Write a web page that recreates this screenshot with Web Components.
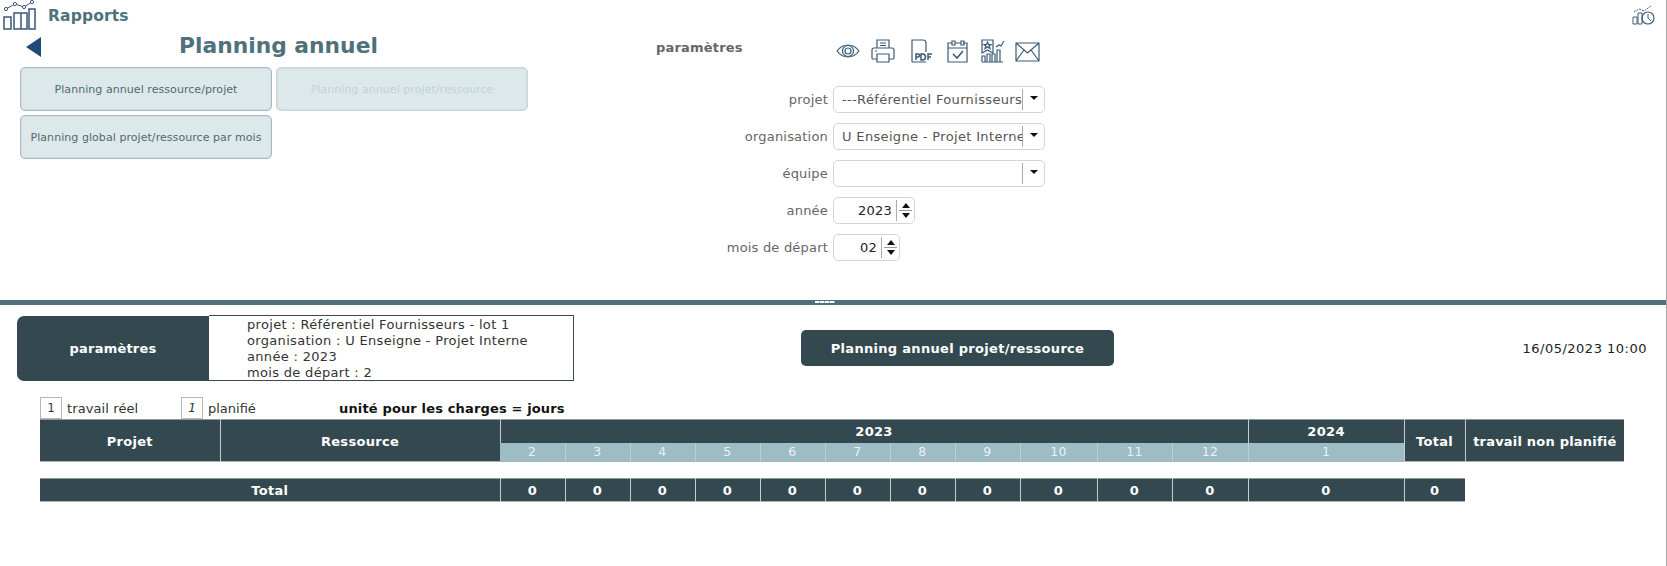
<!DOCTYPE html>
<html lang="fr">
<head>
<meta charset="utf-8">
<title>Planning annuel</title>
<style>
    html, body { margin: 0; height: 100%; background: #fff; }
    body {
        font-family: "DejaVu Sans", Verdana, sans-serif;
        font-size: 13px;
        overflow: hidden;
        box-sizing: border-box;
        border-right: 1px solid #a8a8a8;
    }
    .columns { display: flex; align-items: flex-start; }
</style>
</head>
<body>
<report-topbar title-text="Rapports"></report-topbar>
<div class="columns">
    <report-menu heading="Planning annuel"></report-menu>
    <report-params></report-params>
</div>
<pane-splitter></pane-splitter>
<report-summary></report-summary>
<report-legend></report-legend>
<planning-table></planning-table>

<script>
const ICON = 'fill="none" stroke="#3a5a78" stroke-width="1.2"';

class ReportTopbar extends HTMLElement {
    constructor() {
        super();
        this.attachShadow({ mode: "open" });
    }

    connectedCallback() {
        this.shadowRoot.innerHTML = `
            <style>
                :host { display: flex; align-items: flex-start; height: 33px; }
                svg { display: block; }
                .logo { margin: 0 0 0 3px; }
                .name { margin: 6px 0 0 12px; font-weight: bold; font-size: 15.5px; line-height: 20px; letter-spacing: .15px; color: #4f717c; }
                .history { margin: 4px 11px 0 auto; }
            </style>
            <svg class="logo" width="33" height="31" viewBox="0 0 33 31" ${'fill="none" stroke="#3a5578" stroke-width="1.5"'}>
                <path d="M1 17h7v12H1zM11 13h7v16h-7zM18 13h6v16h-6zM26 9h6v20h-6z"/>
                <path d="M3 9l9-5 9 3 8-5" stroke-width="1"/>
                <circle cx="3" cy="9" r="1.6" fill="#fff" stroke-width="1"/>
                <circle cx="12" cy="4" r="1.6" fill="#fff" stroke-width="1"/>
                <circle cx="21" cy="7" r="1.6" fill="#fff" stroke-width="1"/>
                <circle cx="29" cy="2" r="1.6" fill="#fff" stroke-width="1"/>
            </svg>
            <span class="name">${this.getAttribute('title-text')}</span>
            <svg class="history" width="23" height="21" viewBox="0 0 23 21" fill="none" stroke="#3f5f7c" stroke-width="1">
                <path d="M1 13h4v7H1zM6 9h4v11H6z"/>
                <circle cx="16" cy="14" r="6" stroke-width="1.2"/>
                <path d="M16 10v4l3 3"/>
                <path d="M2 8l5-3 5 2 7-5" stroke-dasharray="2 1"/>
            </svg>
        `;
    }
}

class ReportMenu extends HTMLElement {
    constructor() {
        super();
        this.attachShadow({ mode: "open" });
    }

    connectedCallback() {
        this.shadowRoot.innerHTML = `
            <style>
                :host { display: block; width: 636px; padding-left: 20px; box-sizing: content-box; height: 267px; }
                .head { display: flex; align-items: flex-start; height: 34px; }
                .back { width: 0; height: 0; margin: 4px 0 0 6px; border-style: solid; border-width: 10px 15px 10px 0; border-color: transparent #23497a transparent transparent; }
                h1 { margin: 1px 0 0 138px; font-size: 21.8px; line-height: 24px; font-weight: bold; color: #4f717c; }
                .grid { display: grid; grid-template-columns: 252px 252px; gap: 4px 4px; }
                button {
                    height: 44px; padding: 0; font: 11px "DejaVu Sans", Verdana, sans-serif; letter-spacing: .06px; color: #4f6a72;
                    background: #dde8eb; border: 1px solid #a6bcc5; border-radius: 5px; box-shadow: inset 0 0 0 .5px #c4d3d9;
                }
                button:disabled { color: #bfd3d9; border-color: #c6d6dc; }
            </style>
            <div class="head">
                <div class="back"></div>
                <h1>${this.getAttribute('heading')}</h1>
            </div>
            <div class="grid">
                <button>Planning annuel ressource/projet</button>
                <button disabled>Planning annuel projet/ressource</button>
                <button>Planning global projet/ressource par mois</button>
            </div>
        `;
    }
}

class ReportParams extends HTMLElement {
    constructor() {
        super();
        this.attachShadow({ mode: "open" });
    }

    connectedCallback() {
        this.shadowRoot.innerHTML = `
            <style>
                :host { display: block; width: 400px; color: #666; }
                .top { display: flex; height: 53px; }
                .title { width: 181px; padding-top: 7px; font-weight: bold; font-size: 13px; line-height: 16px; letter-spacing: .2px; }
                .tools { display: flex; align-items: flex-start; padding-top: 6px; }
                .tools svg { display: block; margin-right: 11px; }
                .form { display: grid; grid-template-columns: 172px auto; justify-content: start; gap: 10px 5px; align-items: center; }
                label { text-align: right; font-size: 13px; letter-spacing: .2px; }
            </style>
            <div class="top">
                <div class="title">paramètres</div>
                <div class="tools">
                    <svg style="margin-left:-1px" width="24" height="24" viewBox="0 0 24 24" ${ICON}>
                        <path d="M1 12c6-8 16-8 22 0-6 8-16 8-22 0z"/>
                        <circle cx="12" cy="12" r="5.5"/><circle cx="12" cy="12" r="3"/>
                    </svg>
                    <svg width="25" height="24" viewBox="0 0 25 24" ${ICON}>
                        <path d="M6 9V1h12v8M9 4h6M9 6.500h6"/>
                        <path d="M6 20H2a1 1 0 0 1-1-1v-8a2 2 0 0 1 2-2h18a2 2 0 0 1 2 2v8a1 1 0 0 1-1 1h-4"/>
                        <path d="M6 15h12v8H6zM4 12h2"/>
                    </svg>
                    <svg style="margin-left:3px" width="24" height="24" viewBox="0 0 24 24" ${ICON}>
                        <path d="M2 23V1h11a3 3 0 0 1 3 3v9M2 23h14"/>
                        <rect x="4" y="14" width="20" height="8" fill="#fff" stroke="none"/>
                        <path d="M6 21v-6h2a1.500 1.500 0 0 1 0 3H6M11 15v6h1.500a3 3 0 0 0 0-6zM18 21v-6h4M18 18h3" stroke-width="1.5"/>
                    </svg>
                    <svg style="margin-left:2px" width="22" height="24" viewBox="0 0 22 24" ${ICON}>
                        <path d="M5 4H1v19h19V4h-4M8 4h6M1 9h19"/>
                        <path d="M5 2h3v4H5zM14 2h3v4h-3z"/>
                        <path d="M6 15l4 4 6-7" stroke-width="1.6"/>
                    </svg>
                    <svg style="margin-left:1px;margin-right:10px" width="24" height="24" viewBox="0 0 24 24" ${ICON}>
                        <path d="M1 1h11v13l-5.500-3L1 14z"/>
                        <path d="M6.500 3l1 2.500h2.500l-2 1.500 1 2.500-2.500-1.500-2.500 1.500 1-2.500-2-1.500h2.500z"/>
                        <path d="M1 23v-6h3v6M6 23v-8h3v8M11 23v-8h3v8M16 23V11h3v12M1 23h21M15 8l3-2 2 1 3-5"/>
                    </svg>
                    <svg width="25" height="24" viewBox="0 0 25 24" ${ICON}>
                        <path d="M1 4h23v18H1zM1 4l11.500 10L24 4M1 22l8-11M24 22l-8-11"/>
                    </svg>
                </div>
            </div>
            <div class="form">
                <label>projet</label><combo-field value="---Référentiel Fournisseurs"></combo-field>
                <label>organisation</label><combo-field value="U Enseigne - Projet Interne"></combo-field>
                <label>équipe</label><combo-field value=""></combo-field>
                <label>année</label><spin-field value="2023" width="82"></spin-field>
                <label>mois de départ</label><spin-field value="02" width="67"></spin-field>
            </div>
        `;
    }
}

class ComboField extends HTMLElement {
    constructor() {
        super();
        this.attachShadow({ mode: "open" });
    }

    connectedCallback() {
        this.shadowRoot.innerHTML = `
            <style>
                :host { display: flex; align-items: center; box-sizing: border-box; width: 212px; height: 27px; border: 1px solid #d4d4d4; border-radius: 5px; background: #fff; }
                .val { flex: 1; min-width: 0; padding-left: 8px; overflow: hidden; white-space: nowrap; font-size: 13px; color: #555; letter-spacing: .34px; }
                .btn { flex: none; display: flex; align-items: center; justify-content: center; width: 22px; height: 21px; border-left: 1px solid #aaa; padding-bottom: 3px; box-sizing: border-box; }
                .btn i { width: 0; height: 0; border-style: solid; border-width: 4px 4px 0; border-color: #111 transparent transparent; }
            </style>
            <span class="val">${this.getAttribute('value')}</span>
            <span class="btn"><i></i></span>
        `;
    }
}

class SpinField extends HTMLElement {
    constructor() {
        super();
        this.attachShadow({ mode: "open" });
    }

    connectedCallback() {
        this.shadowRoot.innerHTML = `
            <style>
                :host { display: flex; align-items: center; box-sizing: border-box; width: ${this.getAttribute('width')}px; height: 27px; border: 1px solid #d4d4d4; border-radius: 5px; background: #fff; }
                .val { flex: 1; text-align: right; padding-right: 4px; font-size: 13px; color: #222; letter-spacing: .2px; }
                .btn { display: flex; flex-direction: column; align-items: center; justify-content: space-between; width: 18px; height: 21px; border-left: 1px solid #aaa; box-sizing: border-box; padding: 3px 0; position: relative; }
                .btn::after { content: ""; position: absolute; left: 2px; right: 2px; top: 10px; border-top: 1px solid #999; }
                .up, .down { width: 0; height: 0; border-style: solid; }
                .up { border-width: 0 4px 5px; border-color: transparent transparent #111; }
                .down { border-width: 5px 4px 0; border-color: #111 transparent transparent; }
            </style>
            <span class="val">${this.getAttribute('value')}</span>
            <span class="btn"><i class="up"></i><i class="down"></i></span>
        `;
    }
}

class PaneSplitter extends HTMLElement {
    constructor() {
        super();
        this.attachShadow({ mode: "open" });
    }

    connectedCallback() {
        this.shadowRoot.innerHTML = `
            <style>
                :host { display: flex; height: 5px; background: #4f717c; }
                span { width: 20px; margin: 1px 0 0 815px; height: 2px; background: repeating-linear-gradient(90deg, #fff 0 4px, #9fb3ba 4px 5px); }
            </style>
            <span></span>
        `;
    }
}

class ReportSummary extends HTMLElement {
    constructor() {
        super();
        this.attachShadow({ mode: "open" });
    }

    connectedCallback() {
        this.shadowRoot.innerHTML = `
            <style>
                :host { display: flex; align-items: center; height: 66px; margin: 10px 0 16px 17px; }
                .tag { display: flex; align-items: center; justify-content: center; width: 192px; height: 65px; color: #fff; font-weight: bold; letter-spacing: .2px; background: #34494f; border-radius: 7px 0 0 7px; }
                .box { box-sizing: border-box; width: 365px; height: 66px; padding: 1px 0 0 38px; overflow: hidden; border: 1px solid #3a4a50; border-left: 0; font-size: 13px; line-height: 16px; letter-spacing: .32px; color: #333; background: #fff; }
                .action { display: flex; align-items: center; justify-content: center; width: 313px; height: 36px; margin-left: 227px; font-weight: bold; letter-spacing: .3px; color: #fff; background: #34494f; border-radius: 5px; }
                .date { margin-left: auto; padding-right: 19px; color: #222; font-size: 13px; letter-spacing: .5px; }
            </style>
            <div class="tag">paramètres</div>
            <div class="box">
                projet : Référentiel Fournisseurs - lot 1<br>
                organisation : U Enseigne - Projet Interne<br>
                année : 2023<br>
                mois de départ : 2
            </div>
            <div class="action">Planning annuel projet/ressource</div>
            <div class="date">16/05/2023 10:00</div>
        `;
    }
}

class ReportLegend extends HTMLElement {
    constructor() {
        super();
        this.attachShadow({ mode: "open" });
    }

    connectedCallback() {
        this.shadowRoot.innerHTML = `
            <style>
                :host { display: flex; align-items: center; height: 22px; margin-left: 40px; color: #333; font-size: 13px; }
                b { display: flex; align-items: center; justify-content: center; box-sizing: border-box; width: 22px; height: 22px; border: 1px solid #b5b5b5; font-weight: normal; font-size: 12px; margin-right: 5px; }
                .real { width: 114px; letter-spacing: .1px; }
                .plan { width: 131px; }
                em { font-style: italic; }
                strong { color: #111; letter-spacing: .15px; }
            </style>
            <b>1</b><span class="real">travail réel</span>
            <b><em>1</em></b><span class="plan">planifié</span>
            <strong>unité pour les charges = jours</strong>
        `;
    }
}

class PlanningTable extends HTMLElement {
    constructor() {
        super();
        this.attachShadow({ mode: "open" });
    }

    connectedCallback() {
        const months = [[2, 65], [3, 65], [4, 65], [5, 65], [6, 65], [7, 65], [8, 65], [9, 65], [10, 77], [11, 75], [12, 76]];
        const cols = [180, 280].concat(months.map(m => m[1]), [156, 61]);
        const colgroup = cols.map(w => `<col style="width:${w}px">`).join('');
        const sum = cols.reduce((a, b) => a + b, 0);
        this.shadowRoot.innerHTML = `
            <style>
                :host { display: block; margin-left: 40px; font-size: 13px; color: #fff; font-weight: bold; letter-spacing: .3px; }
                table { table-layout: fixed; border-collapse: collapse; background: #34494f; }
                td, th { padding: 0; text-align: center; border-left: 1px solid #c3cdd0; box-sizing: border-box; }
                td:first-child, th:first-child { border-left: 0; }
                .main { width: ${sum + 159}px; border-bottom: 1px solid #a9b4b7; border-top: 1px solid #8b9a9e; }
                .year { height: 23px; }
                .year th[rowspan] { padding-top: 2px; }
                .mois th { height: 19px; background: #9dbcc6; color: #e9f1f3; font-weight: normal; font-size: 12.500px; }
                .wide { letter-spacing: .2px; }
                .foot { width: ${sum}px; margin-top: 16px; border-top: 1px solid #8b9a9e; border-bottom: 1px solid #a9b4b7; }
                .foot td { height: 23px; }
            </style>
            <table class="main">
                <colgroup>${colgroup}<col style="width:159px"></colgroup>
                <tr class="year">
                    <th rowspan="2">Projet</th>
                    <th rowspan="2">Ressource</th>
                    <th colspan="11">2023</th>
                    <th>2024</th>
                    <th rowspan="2">Total</th>
                    <th rowspan="2" class="wide">travail non planifié</th>
                </tr>
                <tr class="mois">
                    ${months.map(m => `<th>${m[0]}</th>`).join('')}
                    <th>1</th>
                </tr>
            </table>
            <table class="foot">
                <colgroup>${colgroup}</colgroup>
                <tr>
                    <td colspan="2">Total</td>
                    ${months.map(() => '<td>0</td>').join('')}
                    <td>0</td>
                    <td>0</td>
                </tr>
            </table>
        `;
    }
}

customElements.define('report-topbar', ReportTopbar);
customElements.define('report-menu', ReportMenu);
customElements.define('report-params', ReportParams);
customElements.define('combo-field', ComboField);
customElements.define('spin-field', SpinField);
customElements.define('pane-splitter', PaneSplitter);
customElements.define('report-summary', ReportSummary);
customElements.define('report-legend', ReportLegend);
customElements.define('planning-table', PlanningTable);
</script>
</body>
</html>
